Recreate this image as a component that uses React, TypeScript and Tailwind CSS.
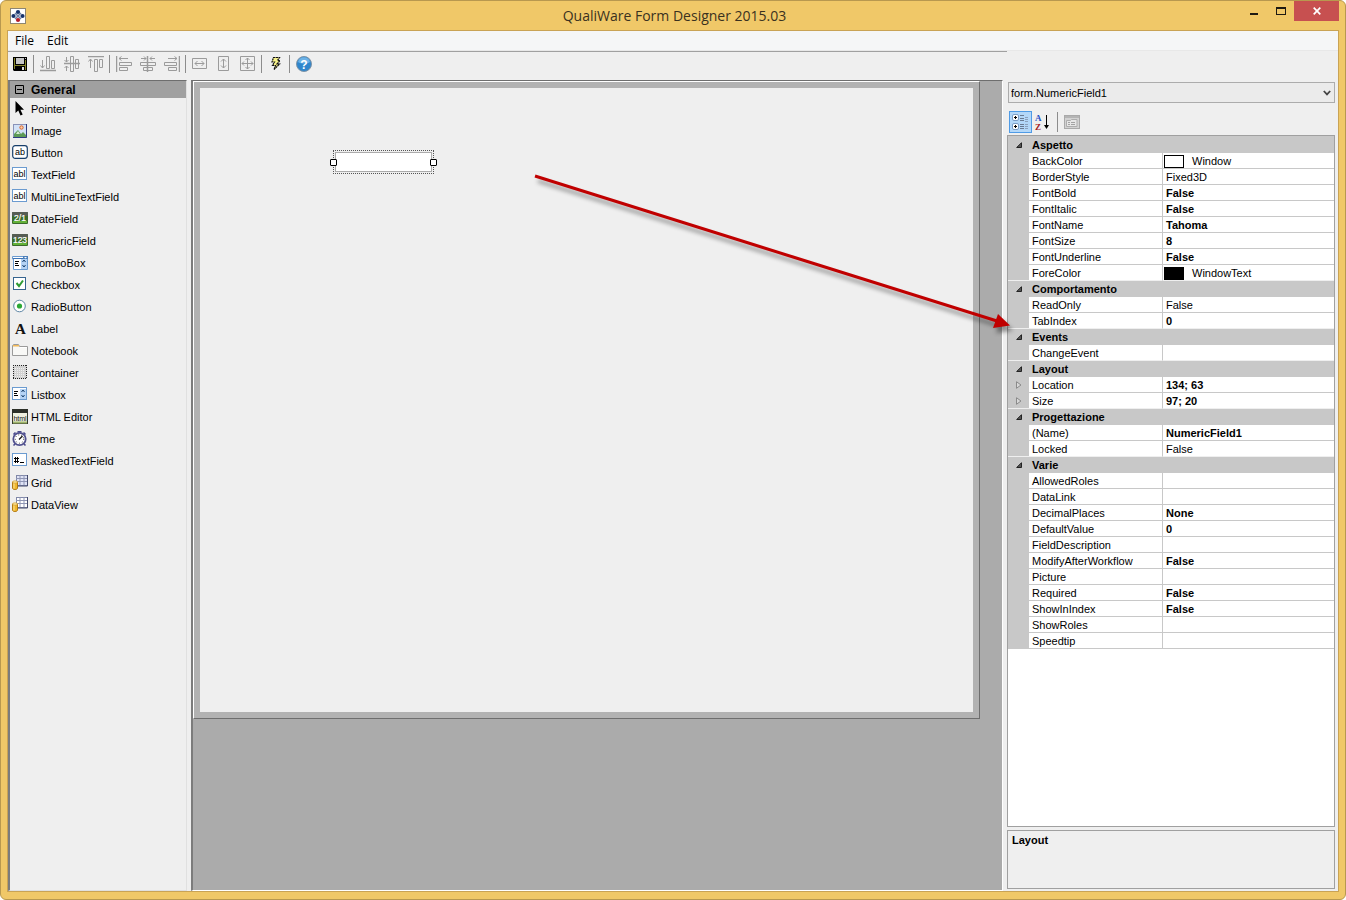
import React, { useState } from "react";

type IconProps = { children: React.ReactNode; className?: string };

function Icon({ children, className = "" }: IconProps) {
  return (
    <svg viewBox="0 0 16 16" width="16" height="16" className={`block shrink-0 ${className}`} aria-hidden="true">
      {children}
    </svg>
  );
}

/* ---------- toolbox icons ---------- */

const PointerIcon = () => (
  <Icon>
    <path d="M3.500 0v12l2.800-2.600L8.500 14.600l2.200-1-2.300-4.800H12z" fill="#000" />
  </Icon>
);

const ImageIcon = () => (
  <Icon>
    <rect x="1.500" y="1.500" width="13" height="13" fill="#d3e2f7" stroke="#8a93b8" />
    <path d="M14.500 1v13.500H1" fill="none" stroke="#2f3c80" />
    <circle cx="9.500" cy="4.500" r="1.700" fill="#fbd0a8" stroke="#d9622b" />
    <path d="M2 14v-3l4-4 3 4 2-2 3 3v2z" fill="#5d9a56" />
    <path d="M4 11l2-3 2 3z" fill="#d9ecd2" />
  </Icon>
);

const ButtonIcon = () => (
  <Icon>
    <rect x="0.700" y="0.700" width="14.600" height="12.600" rx="2.500" fill="#fff" stroke="#173f6b" strokeWidth="1.200" />
    <text x="8" y="10" textAnchor="middle" fontSize="9" fontFamily="Liberation Sans, sans-serif" fill="#000">ab</text>
  </Icon>
);

const TextIcon = ({ label }: { label: string }) => (
  <Icon>
    <rect x="0.500" y="0.500" width="14" height="12" fill="#fff" stroke="#6b9bd0" />
    <text x="7.500" y="10" textAnchor="middle" fontSize="9" fontFamily="Liberation Sans, sans-serif" fill="#000">{label}</text>
  </Icon>
);

const MaskIcon = () => (
  <Icon>
    <rect x="0.500" y="0.500" width="14" height="12" fill="#fff" stroke="#6b9bd0" />
    <path d="M3.500 4v6M5.500 4v6M2 5.500h5M2 8.500h5M8 9.500h4" stroke="#000" />
  </Icon>
);

const GreenIcon = ({ label }: { label: string }) => (
  <Icon>
    <rect x="0" y="1" width="16" height="12" rx="1" fill="#3b6a2b" />
    <rect x="0" y="1" width="16" height="4" rx="1" fill="#565d54" />
    <rect x="1" y="10" width="14" height="2" fill="#63b238" />
    <text x="8" y="10" textAnchor="middle" fontSize="8.500" fontFamily="Liberation Sans, sans-serif" fill="#fff" stroke="#fff" strokeWidth="0.200">{label}</text>
  </Icon>
);

const ListArt = () => (
  <>
    <path d="M3 6.500h4M3 8.500h3M3 10.500h4" stroke="#000" />
    <rect x="9" y="4" width="6" height="10" fill="#b5d3f5" />
    <path d="M10.500 7l1.500-2 1.500 2M10.500 10l1.500 2 1.500-2" fill="none" stroke="#173f6b" />
  </>
);

const ComboIcon = () => (
  <Icon>
    <path d="M0.500 4V1.500h15V14.500H1.500V4z" fill="#fff" stroke="#6b9bd0" />
    <path d="M1 3.500h14" stroke="#3d74b5" />
    <path d="M11 1h5v3h-5z" fill="#4c7fb9" />
    <path d="M12 2h3l-1.500 1.500z" fill="#fff" />
    <ListArt />
  </Icon>
);

const ListboxIcon = () => (
  <Icon>
    <rect x="0.500" y="0.500" width="14" height="12" fill="#fff" stroke="#6b9bd0" />
    <g transform="translate(-1 -2)">
      <ListArt />
    </g>
  </Icon>
);

const CheckIcon = () => (
  <Icon>
    <rect x="1.500" y="0.500" width="12" height="12" fill="#fff" stroke="#36648f" />
    <path d="M4.500 6l2.500 3L11 3.500" fill="none" stroke="#2f9a33" strokeWidth="2" />
  </Icon>
);

const RadioIcon = () => (
  <Icon>
    <circle cx="7.500" cy="7" r="5.800" fill="#fff" stroke="#5e86a5" />
    <circle cx="7.500" cy="7" r="2.600" fill="#2ca836" />
  </Icon>
);

const LabelIcon = () => (
  <Icon>
    <text x="8.500" y="12.500" textAnchor="middle" fontSize="15" fontWeight="bold" fontFamily="Liberation Serif, serif" fill="#111">A</text>
  </Icon>
);

const NotebookIcon = () => (
  <Icon>
    <path d="M0.500 12.500v-10l1-1h5l1 2h8v9z" fill="#f8f8f6" stroke="#9a9a9a" />
    <path d="M1 2h6v1.500H1z" fill="#f1b95a" />
    <path d="M8 4.500h7" stroke="#fff" />
  </Icon>
);

const ContainerIcon = () => (
  <Icon>
    <rect x="1.500" y="0.500" width="13" height="13" fill="#d2d2d2" />
    <path d="M1 0.500h14M1 13.500h14M1.500 0v14M14.500 0v14" stroke="#222" strokeDasharray="1 1" />
    <path d="M3 3.500h10M3 5.500h10M3 7.500h10M3 9.500h10M3 11.500h10" stroke="#efefef" strokeDasharray="1 1" />
  </Icon>
);

const HtmlIcon = () => (
  <Icon>
    <rect x="0.500" y="0.500" width="15" height="14" fill="#eef0df" stroke="#33382b" />
    <rect x="0" y="0" width="16" height="4" fill="#2c3028" />
    <path d="M1 13.500h14" stroke="#9fb56c" strokeWidth="2" />
    <text x="8" y="12" textAnchor="middle" fontSize="7" fontFamily="Liberation Sans, sans-serif" fill="#111">html</text>
  </Icon>
);

const TimeIcon = () => (
  <Icon>
    <path d="M5.500 0.800h4M1.500 3.500l2-2M13.500 3.500l-2-2M3 13l-1.500 1.500M12 13l1.500 1.500" stroke="#4a4a8c" strokeWidth="1.600" />
    <circle cx="7.500" cy="8" r="6.200" fill="#fff" stroke="#51518f" strokeWidth="1.800" />
    <circle cx="7.500" cy="8" r="4.200" fill="none" stroke="#333" strokeDasharray="1 2" />
    <path d="M7 8.500l3.500-3.500" stroke="#111" strokeWidth="1.200" />
  </Icon>
);

const GridIcon = ({ tint }: { tint: string }) => (
  <Icon>
    <rect x="4.500" y="0.500" width="11" height="10" fill={tint} stroke="#8088a8" />
    <path d="M4 3.500h12M4 6.500h12M8 0v11M12 0v11" stroke="#8f96b5" />
    <path d="M15.500 0v11H5" fill="none" stroke="#43496b" />
    <path d="M0.500 7v6c0 2 5 2 5 0V7z" fill="#efb72d" stroke="#b27a14" />
    <path d="M2 8v5.500" stroke="#fbe49a" />
    <ellipse cx="3" cy="7" rx="2.500" ry="1.200" fill="#fbe49a" stroke="#c9921f" strokeWidth="0.600" />
  </Icon>
);

/* ---------- toolbar icons ---------- */

const GREY = "#9b9b9b";

const SaveIcon = () => (
  <Icon>
    <path d="M1 1h14v14H2l-1-1z" fill="#000" />
    <path d="M2 2h1v11H2zM13 4h1v10h-1zM3 9h10v1H3z" fill="#85852a" />
    <rect x="4" y="2" width="8" height="6" fill="#c6c6c6" />
    <rect x="10" y="11" width="2" height="3" fill="#dcdcdc" />
    <rect x="13" y="2" width="1" height="1" fill="#c6c6c6" />
  </Icon>
);

const AlignBottomIcon = () => (
  <Icon>
    <path d="M0 14.500h16" stroke={GREY} strokeWidth="1.500" />
    <path d="M2.500 4v8M0.500 9.500l2 2.500 2-2.500M6.500 12.500v-12h3v12zM11.500 12.500v-8h3v8z" fill="none" stroke={GREY} />
  </Icon>
);

const AlignMiddleIcon = () => (
  <Icon>
    <path d="M0 7.500h16" stroke={GREY} strokeWidth="1.500" />
    <path d="M2.500 1v5M0.500 4l2 2 2-2M2.500 15v-5M0.500 12l2-2 2 2M6.500 0.500h3v15h-3zM11.500 3.500h3v9h-3z" fill="none" stroke={GREY} />
  </Icon>
);

const AlignTopIcon = () => (
  <Icon>
    <path d="M0 0.500h16" stroke={GREY} strokeWidth="1.500" />
    <path d="M2.500 3v9M0.500 5.500l2-2.500 2 2.500M6.500 3.500h3v12h-3zM11.500 3.500h3v8h-3z" fill="none" stroke={GREY} />
  </Icon>
);

const AlignLeftIcon = () => (
  <Icon>
    <path d="M0.500 0v16" stroke={GREY} strokeWidth="1.500" />
    <path d="M3 2.500h9M5.500 0.500l-2.500 2 2.500 2M3.500 6.500h12v3h-12zM3.500 11.500h8v3h-8z" fill="none" stroke={GREY} />
  </Icon>
);

const AlignCenterIcon = () => (
  <Icon>
    <path d="M7.500 0v16" stroke={GREY} strokeWidth="1.500" />
    <path d="M1 2.500h5M4 0.500l2 2-2 2M15 2.500h-5M12 0.500l-2 2 2 2M0.500 6.500h15v3H0.500zM3.500 11.500h9v3h-9z" fill="none" stroke={GREY} />
  </Icon>
);

const AlignRightIcon = () => (
  <Icon>
    <path d="M15.500 0v16" stroke={GREY} strokeWidth="1.500" />
    <path d="M4 2.500h9M10.500 0.500l2.500 2-2.500 2M0.500 6.500h12v3h-12zM4.500 11.500h8v3h-8z" fill="none" stroke={GREY} />
  </Icon>
);

const SameWidthIcon = () => (
  <Icon>
    <path d="M0.500 2.500h14v10H0.500zM3 7.500h9M5.500 5L3 7.500 5.500 10M9.500 5L12 7.500 9.500 10" fill="none" stroke={GREY} />
  </Icon>
);

const SameHeightIcon = () => (
  <Icon>
    <path d="M2.500 0.500h10v14h-10zM7.500 3v9M5 5.500L7.500 3 10 5.500M5 9.500L7.500 12l2.500-2.500" fill="none" stroke={GREY} />
  </Icon>
);

const SameSizeIcon = () => (
  <Icon>
    <path d="M0.500 0.500h14v14H0.500zM2 7.500h11M7.500 2v11M4 5.500L2 7.500l2 2M11 5.500l2 2-2 2M5.500 4l2-2 2 2M5.500 11l2 2 2-2" fill="none" stroke={GREY} />
  </Icon>
);

const BoltIcon = () => (
  <Icon>
    <path d="M5.500 1.500h6l-2 3h2.500L9 8h2.500L6 13.500 7.500 9.500h-3L6.500 6H4z" fill="#f7f28a" stroke="#111" strokeWidth="1.200" strokeDasharray="2 0.500" />
  </Icon>
);

const HelpIcon = () => (
  <Icon>
    <circle cx="8" cy="8" r="7.500" fill="#2f86cc" stroke="#7e93a6" />
    <path d="M2 6a6.200 6.200 0 0 1 12 0c-3 2-9 2-12 0z" fill="#6db2e6" />
    <text x="8" y="12.500" textAnchor="middle" fontSize="12" fontWeight="bold" fontFamily="Liberation Sans, sans-serif" fill="#fff">?</text>
  </Icon>
);

const toolGroups: { name: string; icon: React.ReactNode }[][] = [
  [{ name: "Save", icon: <SaveIcon /> }],
  [
    { name: "Align bottoms", icon: <AlignBottomIcon /> },
    { name: "Align middles", icon: <AlignMiddleIcon /> },
    { name: "Align tops", icon: <AlignTopIcon /> },
  ],
  [
    { name: "Align lefts", icon: <AlignLeftIcon /> },
    { name: "Align centers", icon: <AlignCenterIcon /> },
    { name: "Align rights", icon: <AlignRightIcon /> },
  ],
  [
    { name: "Same width", icon: <SameWidthIcon /> },
    { name: "Same height", icon: <SameHeightIcon /> },
    { name: "Same size", icon: <SameSizeIcon /> },
  ],
  [{ name: "Events", icon: <BoltIcon /> }],
  [{ name: "Help", icon: <HelpIcon /> }],
];

const toolboxItems: { label: string; icon: React.ReactNode }[] = [
  { label: "Pointer", icon: <PointerIcon /> },
  { label: "Image", icon: <ImageIcon /> },
  { label: "Button", icon: <ButtonIcon /> },
  { label: "TextField", icon: <TextIcon label="abl" /> },
  { label: "MultiLineTextField", icon: <TextIcon label="abl" /> },
  { label: "DateField", icon: <GreenIcon label="2/1" /> },
  { label: "NumericField", icon: <GreenIcon label="123" /> },
  { label: "ComboBox", icon: <ComboIcon /> },
  { label: "Checkbox", icon: <CheckIcon /> },
  { label: "RadioButton", icon: <RadioIcon /> },
  { label: "Label", icon: <LabelIcon /> },
  { label: "Notebook", icon: <NotebookIcon /> },
  { label: "Container", icon: <ContainerIcon /> },
  { label: "Listbox", icon: <ListboxIcon /> },
  { label: "HTML Editor", icon: <HtmlIcon /> },
  { label: "Time", icon: <TimeIcon /> },
  { label: "MaskedTextField", icon: <MaskIcon /> },
  { label: "Grid", icon: <GridIcon tint="#dfe3f5" /> },
  { label: "DataView", icon: <GridIcon tint="#ffffff" /> },
];

type Prop = { name: string; value?: string; bold?: boolean; swatch?: "window" | "text"; nested?: boolean };

const propertyGroups: { title: string; props: Prop[] }[] = [
  {
    title: "Aspetto",
    props: [
      { name: "BackColor", value: "Window", swatch: "window" },
      { name: "BorderStyle", value: "Fixed3D" },
      { name: "FontBold", value: "False", bold: true },
      { name: "FontItalic", value: "False", bold: true },
      { name: "FontName", value: "Tahoma", bold: true },
      { name: "FontSize", value: "8", bold: true },
      { name: "FontUnderline", value: "False", bold: true },
      { name: "ForeColor", value: "WindowText", swatch: "text" },
    ],
  },
  {
    title: "Comportamento",
    props: [
      { name: "ReadOnly", value: "False" },
      { name: "TabIndex", value: "0", bold: true },
    ],
  },
  { title: "Events", props: [{ name: "ChangeEvent" }] },
  {
    title: "Layout",
    props: [
      { name: "Location", value: "134; 63", bold: true, nested: true },
      { name: "Size", value: "97; 20", bold: true, nested: true },
    ],
  },
  {
    title: "Progettazione",
    props: [
      { name: "(Name)", value: "NumericField1", bold: true },
      { name: "Locked", value: "False" },
    ],
  },
  {
    title: "Varie",
    props: [
      { name: "AllowedRoles" },
      { name: "DataLink" },
      { name: "DecimalPlaces", value: "None", bold: true },
      { name: "DefaultValue", value: "0", bold: true },
      { name: "FieldDescription" },
      { name: "ModifyAfterWorkflow", value: "False", bold: true },
      { name: "Picture" },
      { name: "Required", value: "False", bold: true },
      { name: "ShowInIndex", value: "False", bold: true },
      { name: "ShowRoles" },
      { name: "Speedtip" },
    ],
  },
];

function TitleBar() {
  return (
    <header className="flex h-[29px] shrink-0 items-stretch">
      <div className="flex flex-1 items-center pl-[3px]">
        <svg viewBox="0 0 16 16" width="16" height="16" aria-hidden="true">
          <rect x="0.500" y="0.500" width="15" height="15" fill="#fff" stroke="#8d8672" />
          <path d="M5 5l6 6M11 5l-6 6" stroke="#6f83a8" strokeWidth="1.500" />
          <circle cx="8" cy="4" r="2.100" fill="#15326b" />
          <circle cx="3.500" cy="8" r="2.100" fill="#15326b" />
          <circle cx="12.500" cy="8" r="2.100" fill="#15326b" />
          <circle cx="8" cy="12" r="2.100" fill="#b51c28" />
        </svg>
      </div>
      <h1 className="self-center font-['Open_Sans',sans-serif] text-[14px] leading-5 text-[#3a3120]">
        QualiWare Form Designer 2015.03
      </h1>
      <div className="flex flex-1 items-start justify-end">
        <button type="button" aria-label="Minimize" className="flex h-5 w-[27px] items-center justify-center">
          <svg viewBox="0 0 10 10" width="10" height="10" aria-hidden="true">
            <path d="M1 7h8v2H1z" fill="#1e1a12" />
          </svg>
        </button>
        <button type="button" aria-label="Maximize" className="flex h-5 w-[27px] items-center justify-center">
          <svg viewBox="0 0 10 10" width="10" height="10" aria-hidden="true">
            <path d="M0 1h10v8H0zM1 3v5h8V3z" fill="#1e1a12" fillRule="evenodd" />
          </svg>
        </button>
        <button type="button" aria-label="Close" className="flex h-5 w-[45px] items-center justify-center bg-[#c75050]">
          <svg viewBox="0 0 8 8" width="8" height="8" aria-hidden="true">
            <path d="M0.700 0.700l6.600 6.600M7.300 0.700L0.700 7.300" stroke="#fff" strokeWidth="1.700" />
          </svg>
        </button>
      </div>
    </header>
  );
}

function Toolbar() {
  return (
    <div role="toolbar" className="flex h-[29px] shrink-0 items-start border-t border-[#a0a0a0]">
      {toolGroups.map((group, i) => (
        <React.Fragment key={i}>
          {i > 0 && (
            <span className="mt-[3px] h-[18px] w-1 shrink-0 pl-px">
              <span className="block h-full w-px bg-[#8c8c8c]" />
            </span>
          )}
          {group.map((tool) => (
            <button key={tool.name} type="button" aria-label={tool.name} className="flex h-6 w-6 shrink-0 items-center justify-center">
              {tool.icon}
            </button>
          ))}
        </React.Fragment>
      ))}
    </div>
  );
}

function Toolbox() {
  return (
    <nav className="flex w-[179px] shrink-0 flex-col border-b border-l-2 border-r border-t border-b-[#e0e0e0] border-l-[#7c7c7c] border-r-[#e0e0e0] border-t-[#6e6e6e] bg-[#efefef]">
      <button type="button" className="flex h-[17px] w-full items-center gap-[7px] bg-[#a0a0a0] pl-[5px] text-left text-[12px] font-bold leading-4">
        <svg viewBox="0 0 9 9" width="9" height="9" aria-hidden="true">
          <path d="M0.500 0.500h8v8h-8zM2 4.500h5" fill="none" stroke="#000" />
        </svg>
        General
      </button>
      <ul>
        {toolboxItems.map((item) => (
          <li key={item.label}>
            <button type="button" className="flex h-[22px] w-full items-center gap-[3px] pl-[2px] text-left">
              {item.icon}
              {item.label}
            </button>
          </li>
        ))}
      </ul>
    </nav>
  );
}

function FormCanvas() {
  return (
    <main className="min-w-0 flex-1 overflow-hidden border-b border-l-2 border-r border-t border-b-white border-l-[#7c7c7c] border-r-white border-t-[#6e6e6e] bg-[#ababab]">
      <div className="h-[638px] w-[787px] border border-b-[#6e6e6e] border-l-white border-r-[#6e6e6e] border-t-white">
        <div className="relative h-full w-full border-[6px] border-[#b2b2b2] bg-[#efefef]">
          <div className="absolute left-[133px] top-[62px] h-6 w-[101px] border border-dotted border-[#555] p-px">
            <input
              aria-label="NumericField1"
              className="block h-full w-full border border-[#ababab] bg-white px-1 outline-none"
            />
            <span className="absolute -left-1 top-2 h-[7px] w-[7px] rounded-[1px] border border-black bg-white" />
            <span className="absolute -right-1 top-2 h-[7px] w-[7px] rounded-[1px] border border-black bg-white" />
          </div>
        </div>
      </div>
    </main>
  );
}

function PropertyRow({ prop, last }: { prop: Prop; last: boolean }) {
  const line = last ? "border-b-[#efefef]" : "border-b-[#c8c8c8]";
  return (
    <tr className="h-4">
      <td className={`h-4 border-b bg-[#c8c8c8] p-0 ${line}`}>
        {prop.nested && (
          <button type="button" aria-label={`Expand ${prop.name}`} className="flex h-[15px] w-full items-center justify-center">
            <svg viewBox="0 0 6 8" width="6" height="8" aria-hidden="true">
              <path d="M0.500 0.700v6.600L5 4z" fill="#d8d8d8" stroke="#8a8a8a" />
            </svg>
          </button>
        )}
      </td>
      <th scope="row" className={`border-b border-r border-r-[#c8c8c8] p-0 pl-[3px] pt-px text-left font-normal leading-[14px] ${line}`}>
        {prop.name}
      </th>
      <td className={`border-b p-0 pt-px leading-[14px] ${line} ${prop.bold ? "font-bold" : ""}`}>
        <span className={`flex items-center ${prop.swatch ? "gap-2 pl-px" : "pl-[3px]"}`}>
          {prop.swatch && (
            <span className={`h-[13px] w-5 border border-black ${prop.swatch === "text" ? "bg-black" : "bg-white"}`} />
          )}
          {prop.value}
        </span>
      </td>
    </tr>
  );
}

function Properties() {
  const [collapsed, setCollapsed] = useState<Record<string, boolean>>({});
  return (
    <aside className="flex w-[331px] shrink-0 flex-col pb-[2px] pr-[3px] pt-[31px]">
      <div className="relative ml-px">
        <select
          aria-label="Selected object"
          className="block h-[21px] w-full appearance-none border border-[#acacac] bg-[#ebebeb] pl-[2px] text-[11px] leading-4 outline-none"
        >
          <option>form.NumericField1</option>
        </select>
        <svg viewBox="0 0 8 6" width="8" height="6" className="pointer-events-none absolute right-1 top-2" aria-hidden="true">
          <path d="M0.800 1L4 4.400 7.200 1" fill="none" stroke="#444" strokeWidth="1.800" />
        </svg>
      </div>

      <div role="toolbar" className="mt-[7px] flex h-6 shrink-0 items-center pl-[2px]">
        <button type="button" aria-label="Categorized" className="flex h-[22px] w-[23px] items-center justify-center border border-[#4f9be6] bg-[#b3d7f8]">
          <svg viewBox="0 0 17 16" width="17" height="16" aria-hidden="true">
            <rect x="0.500" y="0.500" width="6" height="6" rx="1.500" fill="#fff" stroke="#7a9cc4" />
            <rect x="0.500" y="9.500" width="6" height="6" rx="1.500" fill="#fff" stroke="#7a9cc4" />
            <path d="M2 3.500h3M3.500 2v3M2 12.500h3M3.500 11v3" stroke="#000" />
            <path d="M8 1.500h4M8 4.500h4M8 6.500h4M8 10.500h4M8 12.500h4M8 14.500h4" stroke="#6a7a92" />
            <path d="M13 3.500h3M13 5.500h3M13 7.500h3M13 10.500h3M13 12.500h3M13 14.500h3" stroke="#8ba0bc" />
          </svg>
        </button>
        <button type="button" aria-label="Alphabetical" className="flex h-[22px] w-[21px] items-center justify-center">
          <svg viewBox="0 0 16 18" width="16" height="18" className="overflow-visible" aria-hidden="true">
            <text x="0" y="8" fontSize="9" fontWeight="bold" fontFamily="Liberation Serif, serif" fill="#2750c4">A</text>
            <text x="0" y="16.500" fontSize="9" fontWeight="bold" fontFamily="Liberation Serif, serif" fill="#a3201f">Z</text>
            <path d="M11.500 2v12" stroke="#000" />
            <path d="M9 12h5L11.500 16z" fill="#000" />
          </svg>
        </button>
        <span className="ml-1 mr-[5px] h-5 w-px bg-[#8c8c8c]" />
        <button type="button" aria-label="Property pages" disabled className="flex h-[22px] w-[18px] items-center justify-center">
          <svg viewBox="0 0 16 16" width="16" height="16" aria-hidden="true">
            <rect x="0.500" y="1.500" width="15" height="13" fill="#d2d2d2" stroke="#a9a9a9" />
            <path d="M1 3h14" stroke="#b4b4b4" strokeWidth="2" />
            <path d="M2.500 12.500v-6h4l1-1h5.500v7z" fill="#e6e6e6" stroke="#adadad" />
            <path d="M4 8.500h2M7 8.500h4M4 10.500h2M7 10.500h4" stroke="#a2a2a2" />
          </svg>
        </button>
      </div>

      <div className="mt-px min-h-0 flex-1 overflow-hidden border border-[#a0a0a0] bg-white">
        <table className="w-full table-fixed border-separate border-spacing-0 border-t border-[#c8c8c8]">
          <colgroup>
            <col className="w-[21px]" />
            <col className="w-[134px]" />
            <col />
          </colgroup>
          {propertyGroups.map((group, gi) => (
            <tbody key={group.title}>
              <tr className="h-4 bg-[#c8c8c8]">
                <td className="h-4 p-0">
                  <button
                    type="button"
                    aria-label={`Toggle ${group.title}`}
                    onClick={() => setCollapsed({ ...collapsed, [group.title]: !collapsed[group.title] })}
                    className="flex h-4 w-full items-center justify-center"
                  >
                    <svg viewBox="0 0 6 6" width="6" height="6" aria-hidden="true">
                      <path d="M5.500 0.700v4.800H0.700z" fill="#555" stroke="#222" />
                    </svg>
                  </button>
                </td>
                <th scope="rowgroup" colSpan={2} className="p-0 pl-[3px] text-left font-bold leading-4">
                  {group.title}
                </th>
              </tr>
              {!collapsed[group.title] &&
                group.props.map((prop, i) => (
                  <PropertyRow
                    key={prop.name}
                    prop={prop}
                    last={i === group.props.length - 1 && gi < propertyGroups.length - 1}
                  />
                ))}
            </tbody>
          ))}
        </table>
      </div>

      <section className="mt-[3px] h-[59px] shrink-0 border border-[#a0a0a0] bg-[#efefef] px-1 pt-px">
        <h2 className="font-bold leading-4">Layout</h2>
      </section>
    </aside>
  );
}

/* Callout arrow that points at the property list */
function CalloutArrow() {
  return (
    <svg className="pointer-events-none absolute left-[524px] top-[164px] h-[180px] w-[500px]" viewBox="0 0 500 180" aria-hidden="true">
      <g className="drop-shadow-[3px_5px_2px_rgba(0,0,0,0.4)]">
        <path d="M10 11L472 156" stroke="#c00000" strokeWidth="3" />
        <path d="M485 160.500L473 149l-5 14z" fill="#c00000" />
      </g>
    </svg>
  );
}

export default function App() {
  return (
    <div className="relative flex h-screen min-h-[760px] flex-col rounded-md border border-[#b8984f] bg-[#f0c868] px-[6px] pb-[7px] font-['Liberation_Sans',Arial,sans-serif] text-[11px] leading-4 text-black">
      <TitleBar />
      <div className="flex min-h-0 flex-1 flex-col border border-[#c9a355] bg-[#efefef]">
        <nav className="flex h-[20px] shrink-0 items-center border-b border-[#e8e8e8] bg-[#f5f6f7] pl-[7px] pt-px font-['Open_Sans',sans-serif] text-[12px] leading-4">
          <button type="button" className="mr-[13px]">File</button>
          <button type="button">Edit</button>
        </nav>
        <div className="flex min-h-0 flex-1">
          <div className="flex min-w-0 flex-1 flex-col">
            <Toolbar />
            <div className="flex min-h-0 flex-1 gap-1 pr-1">
              <Toolbox />
              <FormCanvas />
            </div>
          </div>
          <Properties />
        </div>
      </div>
      <CalloutArrow />
    </div>
  );
}
